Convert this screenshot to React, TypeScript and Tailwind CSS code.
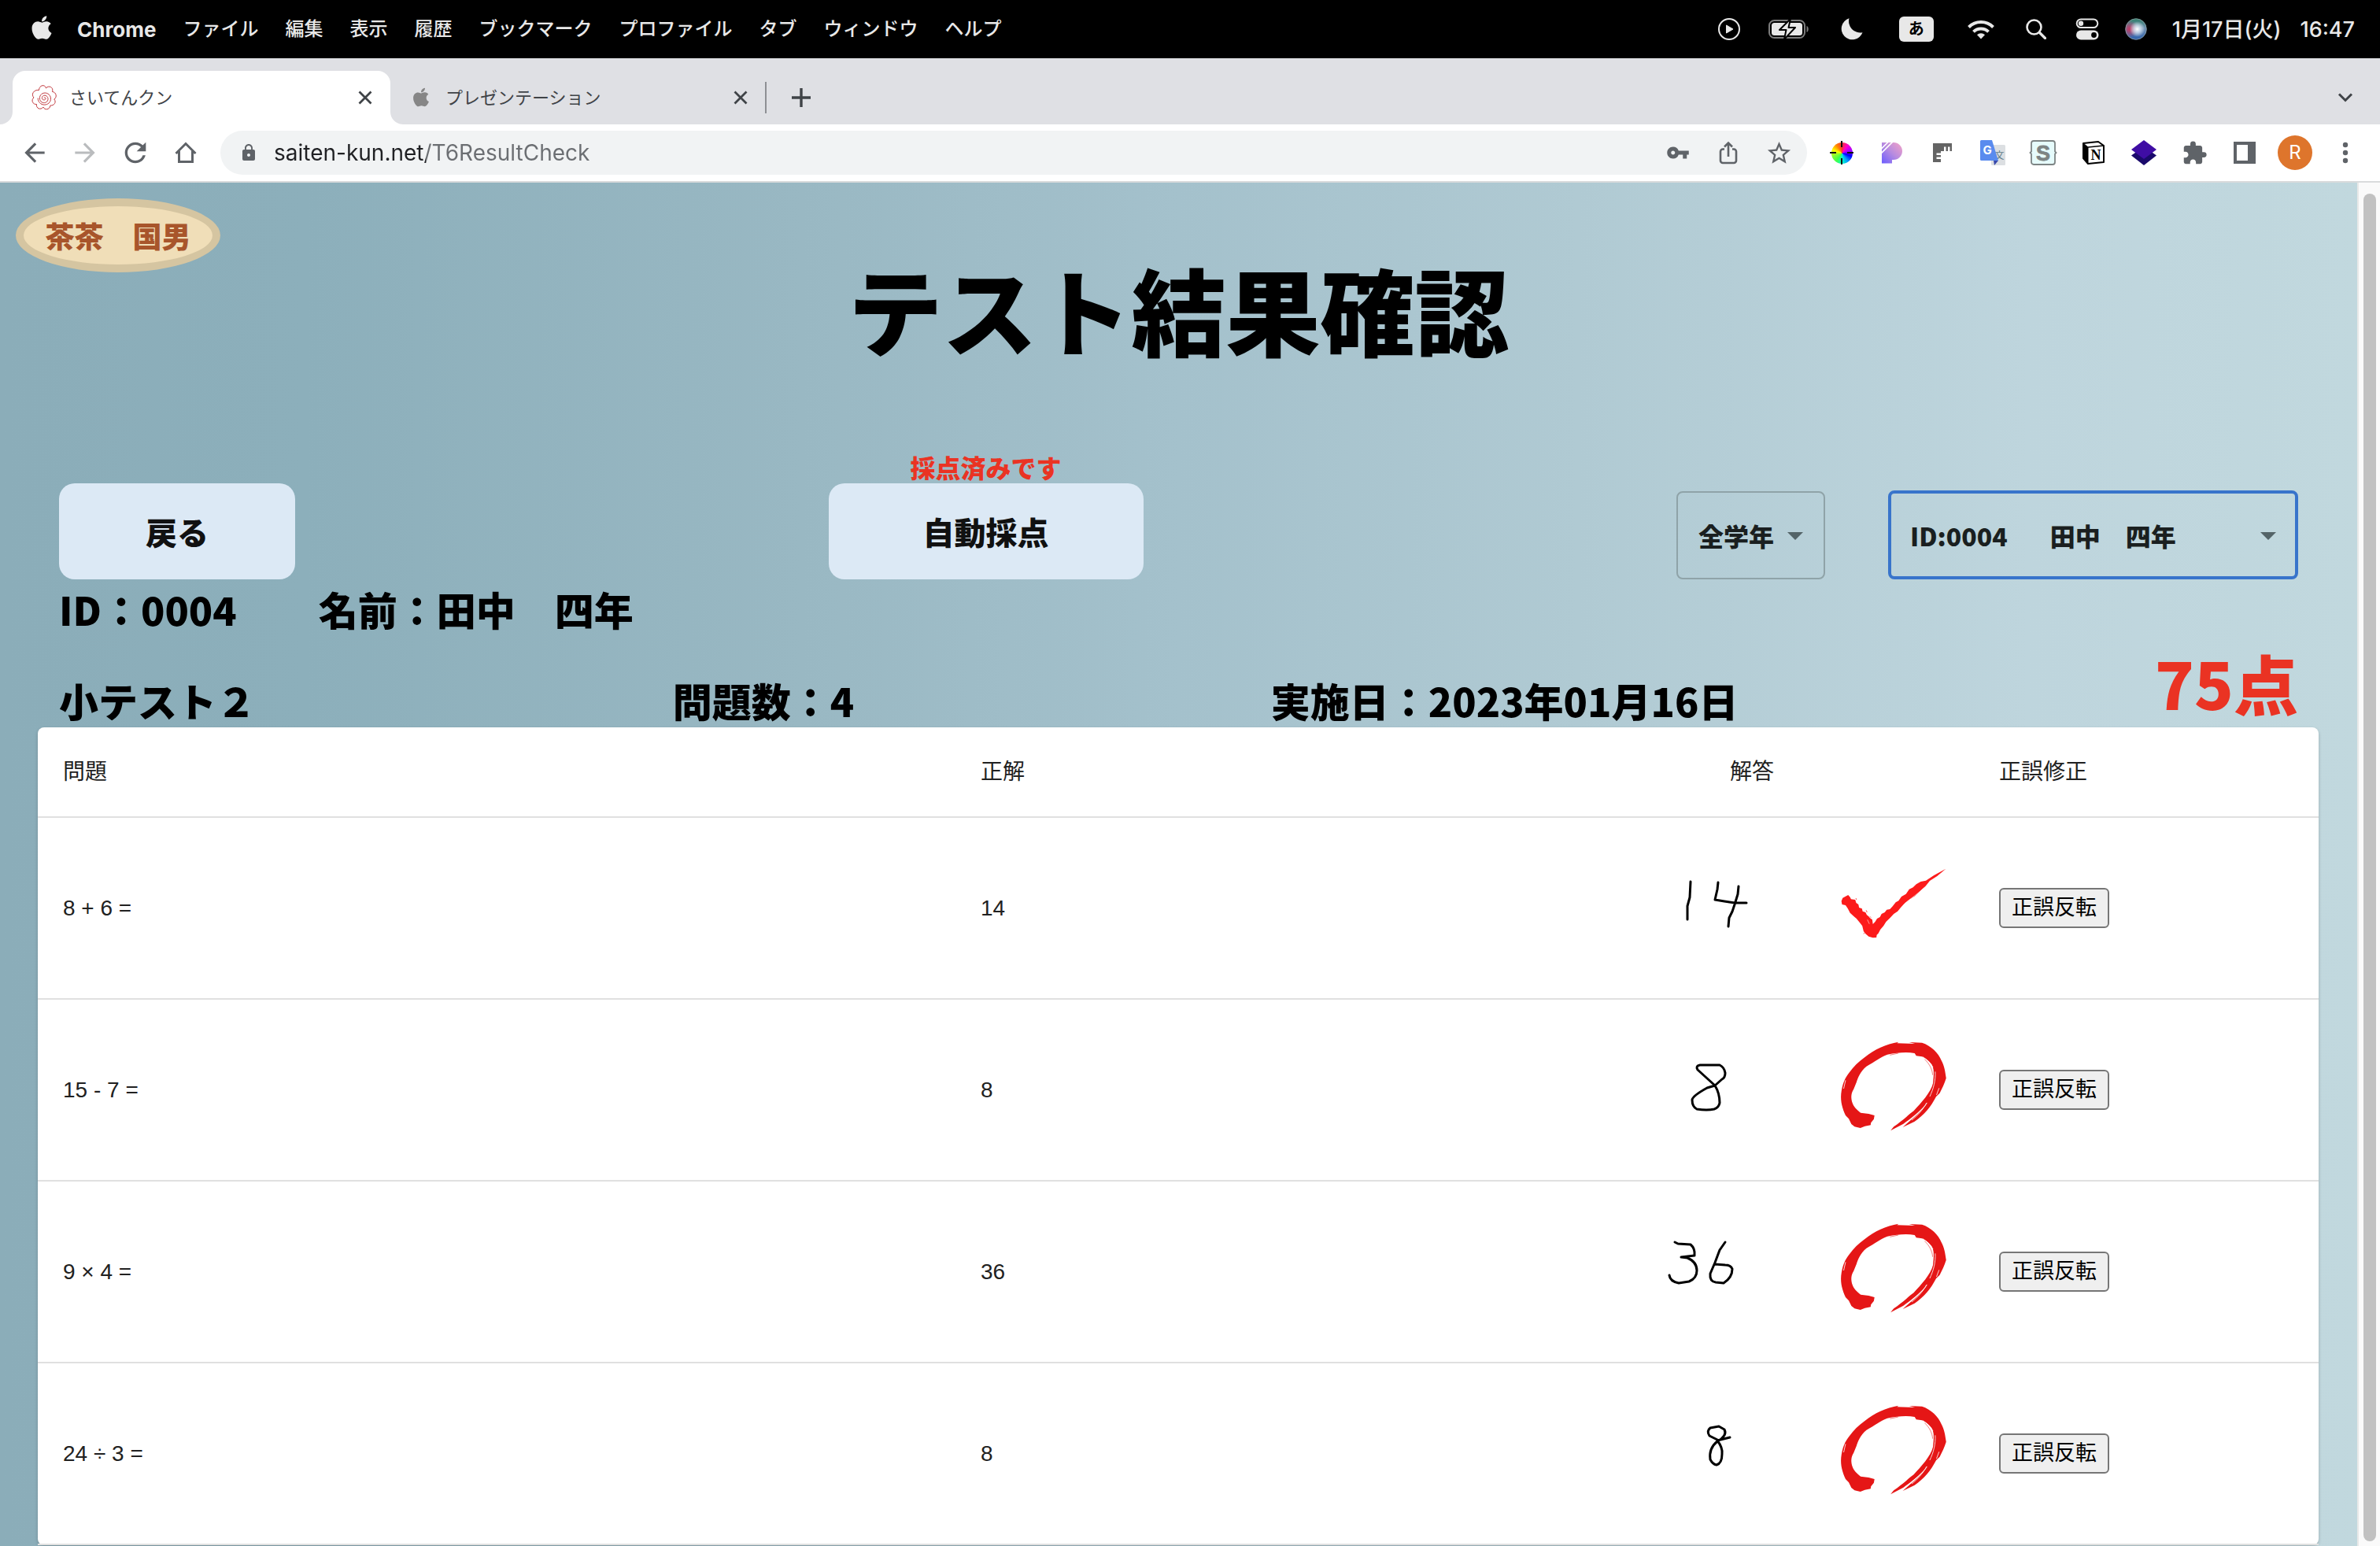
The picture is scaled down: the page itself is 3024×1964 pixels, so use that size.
import React, { useState } from 'react';
import { FaApple } from 'react-icons/fa';
import { MdArrowBack, MdArrowForward, MdExtension, MdLock, MdRefresh, MdStarBorder, MdVpnKey } from 'react-icons/md';

const menus = ['ファイル', '編集', '表示', '履歴', 'ブックマーク', 'プロファイル', 'タブ', 'ウィンドウ', 'ヘルプ'];

function MenuBar() {
  return (
    <header className="flex h-[74px] items-center bg-black pr-8 pl-10 text-[24px] text-[#e8e8e8]">
      <FaApple className="mb-1 h-[34px] w-[26px]" />
      <nav className="ml-8 flex items-center gap-[34px] whitespace-nowrap">
        <button className="text-[26px] font-bold">Chrome</button>
        {menus.map((m) => (
          <button key={m} className="font-medium">{m}</button>
        ))}
      </nav>
      <div className="ml-auto flex items-center">
        <span className="flex w-[66px] justify-center">
          <svg width="28" height="28" viewBox="0 0 28 28" fill="none">
            <circle cx="14" cy="14" r="13" stroke="#e8e8e8" strokeWidth="2" />
            <path d="M10.500 9v10l8.500-5z" fill="#e8e8e8" stroke="#e8e8e8" strokeLinejoin="round" />
          </svg>
        </span>
        <span className="flex w-[86px] justify-center">
          <svg width="52" height="26" viewBox="0 0 52 26" fill="none">
            <rect x="1" y="2" width="45" height="22" rx="6.500" stroke="#7c7c7c" strokeWidth="2" />
            <rect x="4" y="5" width="39" height="16" rx="3.500" fill="#e8e8e8" />
            <path d="M48.500 9v8c3-1 3-7 0-8z" fill="#7c7c7c" />
            <path d="M28 0 14 14h8.500L20 26l14-15h-8.500z" fill="#e8e8e8" stroke="#000" strokeWidth="2" strokeLinejoin="round" />
          </svg>
        </span>
        <span className="flex w-[74px] justify-center">
          <svg width="28" height="28" viewBox="0 0 28 28">
            <path d="M10.500.3A13.800 13.800 0 1 0 27.500 18.200 14.500 14.500 0 0 1 10.500.3z" fill="#e8e8e8" />
          </svg>
        </span>
        <span className="flex w-[90px] justify-center">
          <span className="flex h-8 w-11 items-center justify-center rounded-md bg-[#e8e8e8] text-[20px] leading-none font-bold text-black">あ</span>
        </span>
        <span className="flex w-[74px] justify-center">
          <svg width="34" height="26" viewBox="0 0 34 26" fill="none" stroke="#e8e8e8" strokeWidth="4">
            <path d="M1.500 10.500a22 22 0 0 1 31 0" />
            <path d="M7.500 16.300a13.500 13.500 0 0 1 19 0" />
            <path d="M17 25.500l-5-5.200a7.200 7.200 0 0 1 10 0z" fill="#e8e8e8" stroke="none" />
          </svg>
        </span>
        <span className="flex w-[66px] justify-center">
          <svg width="26" height="26" viewBox="0 0 26 26" fill="none" stroke="#e8e8e8" strokeLinecap="round">
            <circle cx="10.500" cy="10.500" r="9" strokeWidth="2.600" />
            <path d="M17.500 17.500l7 7" strokeWidth="3.200" />
          </svg>
        </span>
        <span className="flex w-16 justify-center">
          <svg width="30" height="28" viewBox="0 0 30 28" fill="none">
            <rect x="1.700" y="1.500" width="26.600" height="10.600" rx="5.300" stroke="#e8e8e8" strokeWidth="2" />
            <circle cx="7" cy="6.800" r="3.200" fill="#e8e8e8" />
            <rect x="1" y="15.500" width="28.500" height="12" rx="6" fill="#e8e8e8" />
            <circle cx="23.500" cy="21.500" r="3.400" fill="#000" />
          </svg>
        </span>
        <span className="flex w-15 justify-center">
          <svg width="28" height="28" viewBox="0 0 28 28">
            <defs>
              <linearGradient id="orb" x1="0.500" y1="0" x2="0.500" y2="1">
                <stop offset="0" stopColor="#2f7f68" />
                <stop offset="0.450" stopColor="#6f8fb0" />
                <stop offset="1" stopColor="#2b5fae" />
              </linearGradient>
              <radialGradient id="orbGlow" cx="0.560" cy="0.500" r="0.360">
                <stop offset="0" stopColor="#fff" />
                <stop offset="0.450" stopColor="#e6f0fa" stopOpacity="0.700" />
                <stop offset="1" stopColor="#fff" stopOpacity="0" />
              </radialGradient>
              <radialGradient id="orbRed" cx="0.200" cy="0.500" r="0.400">
                <stop offset="0" stopColor="#c2375f" />
                <stop offset="1" stopColor="#b23060" stopOpacity="0" />
              </radialGradient>
            </defs>
            <circle cx="14" cy="14" r="13.500" fill="url(#orb)" />
            <circle cx="14" cy="14" r="13.500" fill="url(#orbRed)" />
            <circle cx="14" cy="14" r="13.500" fill="url(#orbGlow)" />
            <circle cx="14" cy="14" r="13.200" fill="none" stroke="#8a9aa0" strokeWidth="0.800" />
          </svg>
        </span>
        <time className="ml-4 flex gap-6 text-[27px] leading-none font-medium whitespace-nowrap">
          <span>1月17日(火)</span>
          <span>16:47</span>
        </time>
      </div>
    </header>
  );
}

function FlowerIcon() {
  return (
    <svg width="32" height="32" viewBox="0 0 32 32" fill="none" stroke="#c23a3f" strokeWidth="1">
      <path d="M9.500 6.500c.5-7 8-7.500 9-2.500 3-4 10-1.500 8 4.500 5 .5 6.500 7 2.300 9.500 3.500 4-.5 8.500-4.800 8-1 6-7.500 6-9 2-3.500 4.500-9.500 1.500-8.500-3.500-5 .5-7.500-5.500-3.500-8.500C-1 12 3 5.500 9.500 6.500z" />
      <path d="M16 16.500c.3-1.300 2-.8 2 .6 0 2-3 2.600-4.200.8-1.300-2.200.6-4.900 3.200-4.700 3.300.3 4.900 3.900 3.500 6.700-1.600 3.100-6 3.600-8.400 1.100-3-3-2-8.400 2-10.300 4.800-2.200 10 1.200 10.400 6.200.3 4.800-3.700 8.400-8.300 8.200-4.500-.2-8.200-3.800-8-8.500" />
    </svg>
  );
}

function Cross() {
  return (
    <svg width="18" height="18" viewBox="0 0 18 18" stroke="#3f4347" strokeWidth="2.800">
      <path d="M1.500 1.500l15 15M16.500 1.500l-15 15" />
    </svg>
  );
}

function TabStrip() {
  return (
    <div className="flex h-[84px] items-end bg-[#dfe0e4] pr-7 text-[22px] text-[#3f4347]">
      <svg width="16" height="16" viewBox="0 0 16 16"><path d="M16 0v16H0A16 16 0 0 0 16 0z" fill="#fff" /></svg>
      <div className="flex h-[68px] w-[480px] items-center rounded-t-2xl bg-white pr-[23px] pl-6">
        <FlowerIcon />
        <span className="ml-4 flex-1">さいてんクン</span>
        <button aria-label="タブを閉じる"><Cross /></button>
      </div>
      <svg width="16" height="16" viewBox="0 0 16 16"><path d="M0 0v16h16A16 16 0 0 1 0 0z" fill="#fff" /></svg>
      <div className="flex h-[68px] w-[462px] items-center pl-3">
        <FaApple className="mb-0.5 h-[27px] w-[22px] text-[#868686]" />
        <span className="ml-5 flex-1">プレゼンテーション</span>
        <button aria-label="タブを閉じる"><Cross /></button>
        <span className="ml-[22px] h-10 w-0.5 bg-[#8e9094]" />
      </div>
      <button aria-label="新しいタブ" className="ml-[31px] flex h-[68px] items-center">
        <svg width="26" height="26" viewBox="0 0 26 26" stroke="#3f4347" strokeWidth="3.400"><path d="M13 1v24M1 13h24" /></svg>
      </button>
      <button aria-label="タブを検索" className="ml-auto flex h-[68px] items-center pr-1.5">
        <svg width="20" height="14" viewBox="0 0 20 14" fill="none" stroke="#3f4347" strokeWidth="3"><path d="M2 2.500l8 8 8-8" /></svg>
      </button>
    </div>
  );
}

function Tool({ label, children }: { label: string; children: React.ReactNode }) {
  return (
    <button aria-label={label} className="flex h-14 w-16 shrink-0 items-center justify-center text-[#5f6368]">
      {children}
    </button>
  );
}

function Toolbar() {
  return (
    <div className="flex h-[74px] items-center border-b-2 border-[#d9dbdc] bg-white px-3">
      <Tool label="戻る"><MdArrowBack size={38} /></Tool>
      <Tool label="進む"><MdArrowForward size={38} className="text-[#babcbe]" /></Tool>
      <Tool label="再読み込み"><MdRefresh size={40} /></Tool>
      <Tool label="ホーム">
        <svg width="28" height="28" viewBox="0 0 28 28" fill="none" stroke="#5f6368" strokeWidth="3"><path d="M1.500 15 14 2.500 26.500 15M5.500 12v13.500h17V12" /></svg>
      </Tool>
      <div className="mx-3 flex h-14 flex-1 items-center rounded-full bg-[#f1f3f4] pr-1 pl-6">
        <MdLock size={24} className="text-[#5f6368]" />
        <input
          aria-label="アドレス"
          defaultValue="saiten-kun.net/T6ResultCheck"
          className="ml-5 h-14 min-w-0 flex-1 bg-[linear-gradient(90deg,#202124_193px,#6b6e72_193px)] bg-clip-text text-[28px] leading-[56px] text-transparent outline-none"
        />
        <Tool label="パスワード"><MdVpnKey size={30} /></Tool>
        <Tool label="共有">
          <svg width="24" height="30" viewBox="0 0 24 30" fill="none" stroke="#5f6368" strokeWidth="2.600"><path d="M7 10.500H5A3 3 0 0 0 2 13.500V25a3 3 0 0 0 3 3h14a3 3 0 0 0 3-3V13.500a3 3 0 0 0-3-3h-2M12 20V3M7 7.500l5-5 5 5" /></svg>
        </Tool>
        <Tool label="ブックマーク"><MdStarBorder size={35} /></Tool>
      </div>
      <Tool label="カラーピッカー">
        <span className="flex h-[27px] w-[27px] items-center justify-center rounded-full bg-[conic-gradient(from_0deg,#f33,#f0c,#a0f,#00f,#09f,#0fc,#4f4,#8f3,#ff0,#f80,#f33)]">
          <svg className="shrink-0" width="30" height="30" viewBox="0 0 30 30" stroke="#111" strokeWidth="2"><path d="M15 0v8M15 22v8M0 15h8M22 15h8" /></svg>
        </span>
      </Tool>
      <Tool label="ページ装飾">
        <svg width="28" height="28" viewBox="0 0 28 28">
          <defs><linearGradient id="pg" x1="0" y1="1" x2="1" y2="0"><stop offset="0" stopColor="#6a5cff" /><stop offset="0.500" stopColor="#b78be0" /><stop offset="1" stopColor="#f5a3c6" /></linearGradient></defs>
          <path d="M1 1h15a11 11 0 0 1 0 22h-2v4.500H1z" fill="url(#pg)" />
          <path d="M0 9.500 9.500 0M0 15 15 0" stroke="#fff" strokeWidth="1.600" />
        </svg>
      </Tool>
      <Tool label="定規">
        <svg width="26" height="26" viewBox="0 0 26 26" fill="#646464"><path d="M1 1h24v10h-2.500V5.500H20V11h-2.500V5.500H15V11H11v2.500H5.500V16H11v2.500H5.500V21H11v4H1z" /></svg>
      </Tool>
      <Tool label="翻訳">
        <svg width="32" height="32" viewBox="0 0 32 32">
          <rect x="14" y="6" width="18" height="26" rx="1.500" fill="#dcdfe2" />
          <text x="18.500" y="23.500" fontSize="12" fill="#607d8b" fontFamily="Noto Sans CJK JP">文</text>
          <path d="M17 26h6l-5 6z" fill="#3949ab" />
          <path d="M1.500 0H15l8 26H1.500A1.500 1.500 0 0 1 0 24.500v-23A1.500 1.500 0 0 1 1.500 0z" fill="#5a8bee" />
          <text x="3.500" y="18" fontSize="15" fontWeight="700" fill="#fff" fontFamily="Inter">G</text>
        </svg>
      </Tool>
      <Tool label="スタイル">
        <svg className="overflow-visible" width="34" height="32" viewBox="0 0 34 32">
          <path d="M5 1h24a3 3 0 0 1 3 3v10.500l1.500 1.500-1.500 1.500V28a3 3 0 0 1-3 3H5a3 3 0 0 1-3-3V17.500L.5 16 2 14.500V4a3 3 0 0 1 3-3z" fill="#e6fbfb" stroke="#7d8484" strokeWidth="1.800" />
          <text x="17" y="26" textAnchor="middle" fontSize="27" fontWeight="700" fill="#7d8484" stroke="#7d8484" strokeWidth="0.800" fontFamily="Liberation Sans">S</text>
        </svg>
      </Tool>
      <Tool label="ノート">
        <svg width="28" height="30" viewBox="0 0 28 30">
          <path d="M1 3 20 1l7 5v21l-20 2-6-7z" fill="#fff" stroke="#000" strokeWidth="2" strokeLinejoin="round" />
          <path d="M1 3l6 5v21l-6-7z" stroke="#000" strokeLinejoin="round" />
          <path d="M7 8l20-2" stroke="#000" strokeWidth="1.500" />
          <text x="17" y="23.500" textAnchor="middle" fontSize="18" fontWeight="700" fill="#000" fontFamily="Liberation Serif">N</text>
        </svg>
      </Tool>
      <Tool label="レイヤー">
        <svg width="32" height="32" viewBox="0 0 32 32"><path d="M0 19.500 5 16h22l5 3.500L16 32z" fill="#1a0a6b" /><path d="M16 0l16 12-16 12L0 12z" fill="#3f0da4" /></svg>
      </Tool>
      <Tool label="拡張機能"><MdExtension size={33} /></Tool>
      <Tool label="サイドパネル">
        <svg width="28" height="28" viewBox="0 0 28 28"><path fillRule="evenodd" d="M0 0h28v28H0zM4 4v20h14V4z" fill="#5f6368" /></svg>
      </Tool>
      <Tool label="プロフィール">
        <span className="flex h-11 w-11 items-center justify-center rounded-full bg-[#de752c] text-[24px] leading-none text-white">R</span>
      </Tool>
      <Tool label="メニュー">
        <svg width="8" height="28" viewBox="0 0 8 28" fill="#5f6368"><circle cx="4" cy="4" r="3.200" /><circle cx="4" cy="14" r="3.200" /><circle cx="4" cy="24" r="3.200" /></svg>
      </Tool>
    </div>
  );
}

function CheckMark() {
  return (
    <svg className="mx-auto h-[140px] w-[140px]" viewBox="628 73 343 420" preserveAspectRatio="none" role="img" aria-label="不正解">
      <path
        fill="#fc1b1b"
        d="M637 255L641 243 650 237 658 232 664 240 667 248 680 250 683 262 690 268 692 280 701 284 703 294 712 298 716 308 722 314 726 320 733 326 735 343 742 334 748 322 757 316 762 304 772 298 778 288 788 286 797 274 806 260 815 254 824 238 838 228 848 210 860 203 870 191 884 181 900 177 925 157 962 132 935 160 912 178 898 200 888 210 866 236 848 250 832 266 822 279 812 294 800 304 788 320 776 334 768 350 758 364 752 378 747 384 746 394 735 395 722 390 712 380 706 370 702 350 696 340 684 322 676 314 664 300 657 284 650 271 639 268z"
      />
      <path d="M912 186l-34 36-44 42M718 326l6 16" stroke="#fff" strokeWidth="1.500" fill="none" />
      <path d="M682 244l2 6M714 290l3 8M709 376l-3 4M726 314l3 4" stroke="#fc1b1b" strokeWidth="2" />
    </svg>
  );
}

function CircleMark() {
  return (
    <svg className="mx-auto h-[140px] w-[140px]" viewBox="628 766 343 420" preserveAspectRatio="none" role="img" aria-label="正解">
      <path
        fill="#e51616"
        d="M740 1072l-2 14-9 14-1 9-18 4-14 7-18-5-10-10-8-20-10-13c-10-27-16-52-14-82 4-40 12-60 26-82 13-23 28-40 48-58 30-30 65-50 105-58l-5 5 56 2-18-6 40 2c27 10 52 40 60 67 10 23 12 43 15 68-5 20-13 40-20 57l-11 13c-17 40-37 70-67 95l-37 22 22-24c25-25 50-56 56-72-26 40-56 65-76 83l-40 26 10-15c30-25 50-50 62-60 23-30 53-70 60-105 3-30 3-50 0-60-4-18-17-30-34-42l-18-3-5-10c-25-6-55-2-85 5-20 8-40 28-65 45-20 20-27 45-31 60l-9 27c-7 13-9 28-5 48 5 20 15 30 27 42l25 4z"
      />
      <path d="M890 849c14 10 26 24 32 40M929 905c2 32-6 68-17 95M941 968l-8 26M902 1024c-12 28-28 48-46 66M650 938l-6 32" stroke="#fff" strokeWidth="2.200" fill="none" />
      <path d="M788 842l26-7M896 858c16 18 24 40 25 60" stroke="#e51616" strokeWidth="1.500" fill="none" />
    </svg>
  );
}

type Row = { question: string; answer: string; strokes: string; correct: boolean };

const rows: Row[] = [
  {
    question: '8 + 6 =',
    answer: '14',
    correct: false,
    strokes: 'M44 66L43 86 40 97V114M79 67L78 76 75 89 87 91 100 93 115 93M105 72L104 82 100 95 97 104 93 112 92 123',
  },
  {
    question: '15 - 7 =',
    answer: '8',
    correct: true,
    strokes: 'M84 86Q88 84 88 78 87 71 81 68H56Q50 69 53 74L75 94Q81 104 81 116 80 122 74 124 65 126 52 124 46 121 46 112 47 107 65 97L75 94 84 86',
  },
  {
    question: '9 × 4 =',
    answer: '36',
    correct: true,
    strokes: 'M24 62L28 64 44 65Q50 70 49 79L32 81 40 82Q52 87 52 98 52 108 42 112L29 114Q18 112 17 104M88 62L81 72 75 88 69 102Q68 112 76 113L86 114Q97 107 97 96 95 91 88 91L75 90',
  },
  {
    question: '24 ÷ 3 =',
    answer: '8',
    correct: true,
    strokes: 'M78 82L68 77Q64 71 69 67L80 65 87 69Q91 77 78 84 67 93 69 107 72 113 77 114 84 112 84 100 85 92 78 83L86 81 94 79',
  },
];

const title = "font-['Noto_Sans_CJK_JP',sans-serif] font-black text-black";

function ResultTable() {
  return (
    <div className="mr-[49px] ml-12 rounded-lg bg-white shadow-[0_2px_4px_rgba(0,0,0,0.2)]">
      <table className="w-full table-fixed border-collapse text-left font-['Liberation_Sans','Noto_Sans_CJK_JP',sans-serif] text-[28px] text-[#212121]">
        <colgroup>
          <col className="w-[1166px]" />
          <col />
          <col className="w-[200px]" />
          <col className="w-[204px]" />
          <col className="w-[438px]" />
        </colgroup>
        <thead>
          <tr className="h-[114px] border-b-2 border-[#e0e0e0]">
            <th className="px-8 font-normal">問題</th>
            <th className="px-8 font-normal">正解</th>
            <th className="pr-[50px] text-right font-normal">解答</th>
            <th aria-label="判定" />
            <th className="px-8 font-normal">正誤修正</th>
          </tr>
        </thead>
        <tbody>
          {rows.map((r) => (
            <tr key={r.question} className="h-[231px] border-b-2 border-[#e0e0e0]">
              <td className="px-8">{r.question}</td>
              <td className="px-8">{r.answer}</td>
              <td>
                <svg width="200" height="200" viewBox="0 0 200 200" fill="none" stroke="#000" strokeWidth="3" strokeLinecap="round" strokeLinejoin="round">
                  <path d={r.strokes} />
                </svg>
              </td>
              <td>{r.correct ? <CircleMark /> : <CheckMark />}</td>
              <td className="px-8">
                <button className="h-[51px] rounded-md border-2 border-[#767676] bg-[#efefef] px-3.5 text-[27px] leading-none text-black">正誤反転</button>
              </td>
            </tr>
          ))}
        </tbody>
      </table>
    </div>
  );
}

function Caret() {
  return (
    <svg className="pointer-events-none absolute top-1/2 right-7 -mt-1" width="20" height="10" viewBox="0 0 20 10"><path d="M0 0h20L10 10z" fill="#546468" /></svg>
  );
}

function Page() {
  const [grade, setGrade] = useState('全学年');
  return (
    <main className="flex min-w-0 flex-1 flex-col bg-[linear-gradient(90deg,#8badb9_0%,#8cafbb_13%,#99b8c3_34%,#a4c1cc_50%,#b0cad3_67%,#bed5dd_86%,#c1d8de_100%)]">
      <div className="mt-5 ml-5 flex h-[94px] w-[260px] items-center justify-center rounded-[50%] border-10 border-[#d5c5a1] bg-[#f0deb8] font-['Noto_Sans_CJK_JP',sans-serif] text-[37px] leading-none font-black whitespace-nowrap text-[#a8552b]">
        茶茶　国男
      </div>
      <h1 className={`${title} text-center text-[120px] leading-[92px]`}>テスト結果確認</h1>
      <div className="mt-[134px] flex items-end justify-between px-[75px] font-['Noto_Sans_CJK_JP',sans-serif] font-black text-[#111]">
        <button className="h-[122px] w-[300px] rounded-[20px] bg-[#dce9f5] text-[40px]">戻る</button>
        <div className="w-[400px] text-center">
          <p className="text-[32px] leading-[42px] text-[#ea3323]">採点済みです</p>
          <button className="h-[122px] w-full rounded-[20px] bg-[#dce9f5] text-[40px]">自動採点</button>
        </div>
        <div className="flex items-end gap-20 text-[32px] text-[#1a1f20]">
          <div className="relative">
            <select
              aria-label="学年"
              value={grade}
              onChange={(e) => setGrade(e.target.value)}
              className="h-28 w-[189px] appearance-none rounded-lg border-2 border-[#8fa3a8] bg-transparent pl-6.5"
            >
              <option>全学年</option>
            </select>
            <Caret />
          </div>
          <div className="relative">
            <select aria-label="生徒" className="h-[113px] w-[521px] appearance-none rounded-lg border-4 border-[#3874cb] bg-transparent pl-6">
              <option>{'ID:0004　\u00a0\u00a0\u00a0田中　四年'}</option>
            </select>
            <Caret />
          </div>
        </div>
      </div>
      <p className={`${title} flex gap-26 px-[75px] text-[50px] leading-[74px]`}>
        <span>ID：0004</span>
        <span>名前：田中　四年</span>
      </p>
      <div className={`${title} flex items-end justify-between px-[75px] text-[50px] leading-[70px]`}>
        <h2>小テスト２</h2>
        <p>問題数：4</p>
        <p>実施日：2023年01月16日</p>
        <p className="text-[82px] leading-[114px] text-[#ea3323]">75点</p>
      </div>
      <ResultTable />
    </main>
  );
}

export default function App() {
  return (
    <div className="flex min-h-screen flex-col font-['Inter','Noto_Sans_CJK_JP',sans-serif]">
      <MenuBar />
      <TabStrip />
      <Toolbar />
      <div className="flex flex-1">
        <Page />
        <div className="flex w-[29px] justify-center border-l-2 border-[#e8e8e8] bg-[#fafafa] pt-3.5 pb-1.5">
          <div className="w-4 rounded-full bg-[#c1c1c1]" />
        </div>
      </div>
    </div>
  );
}
